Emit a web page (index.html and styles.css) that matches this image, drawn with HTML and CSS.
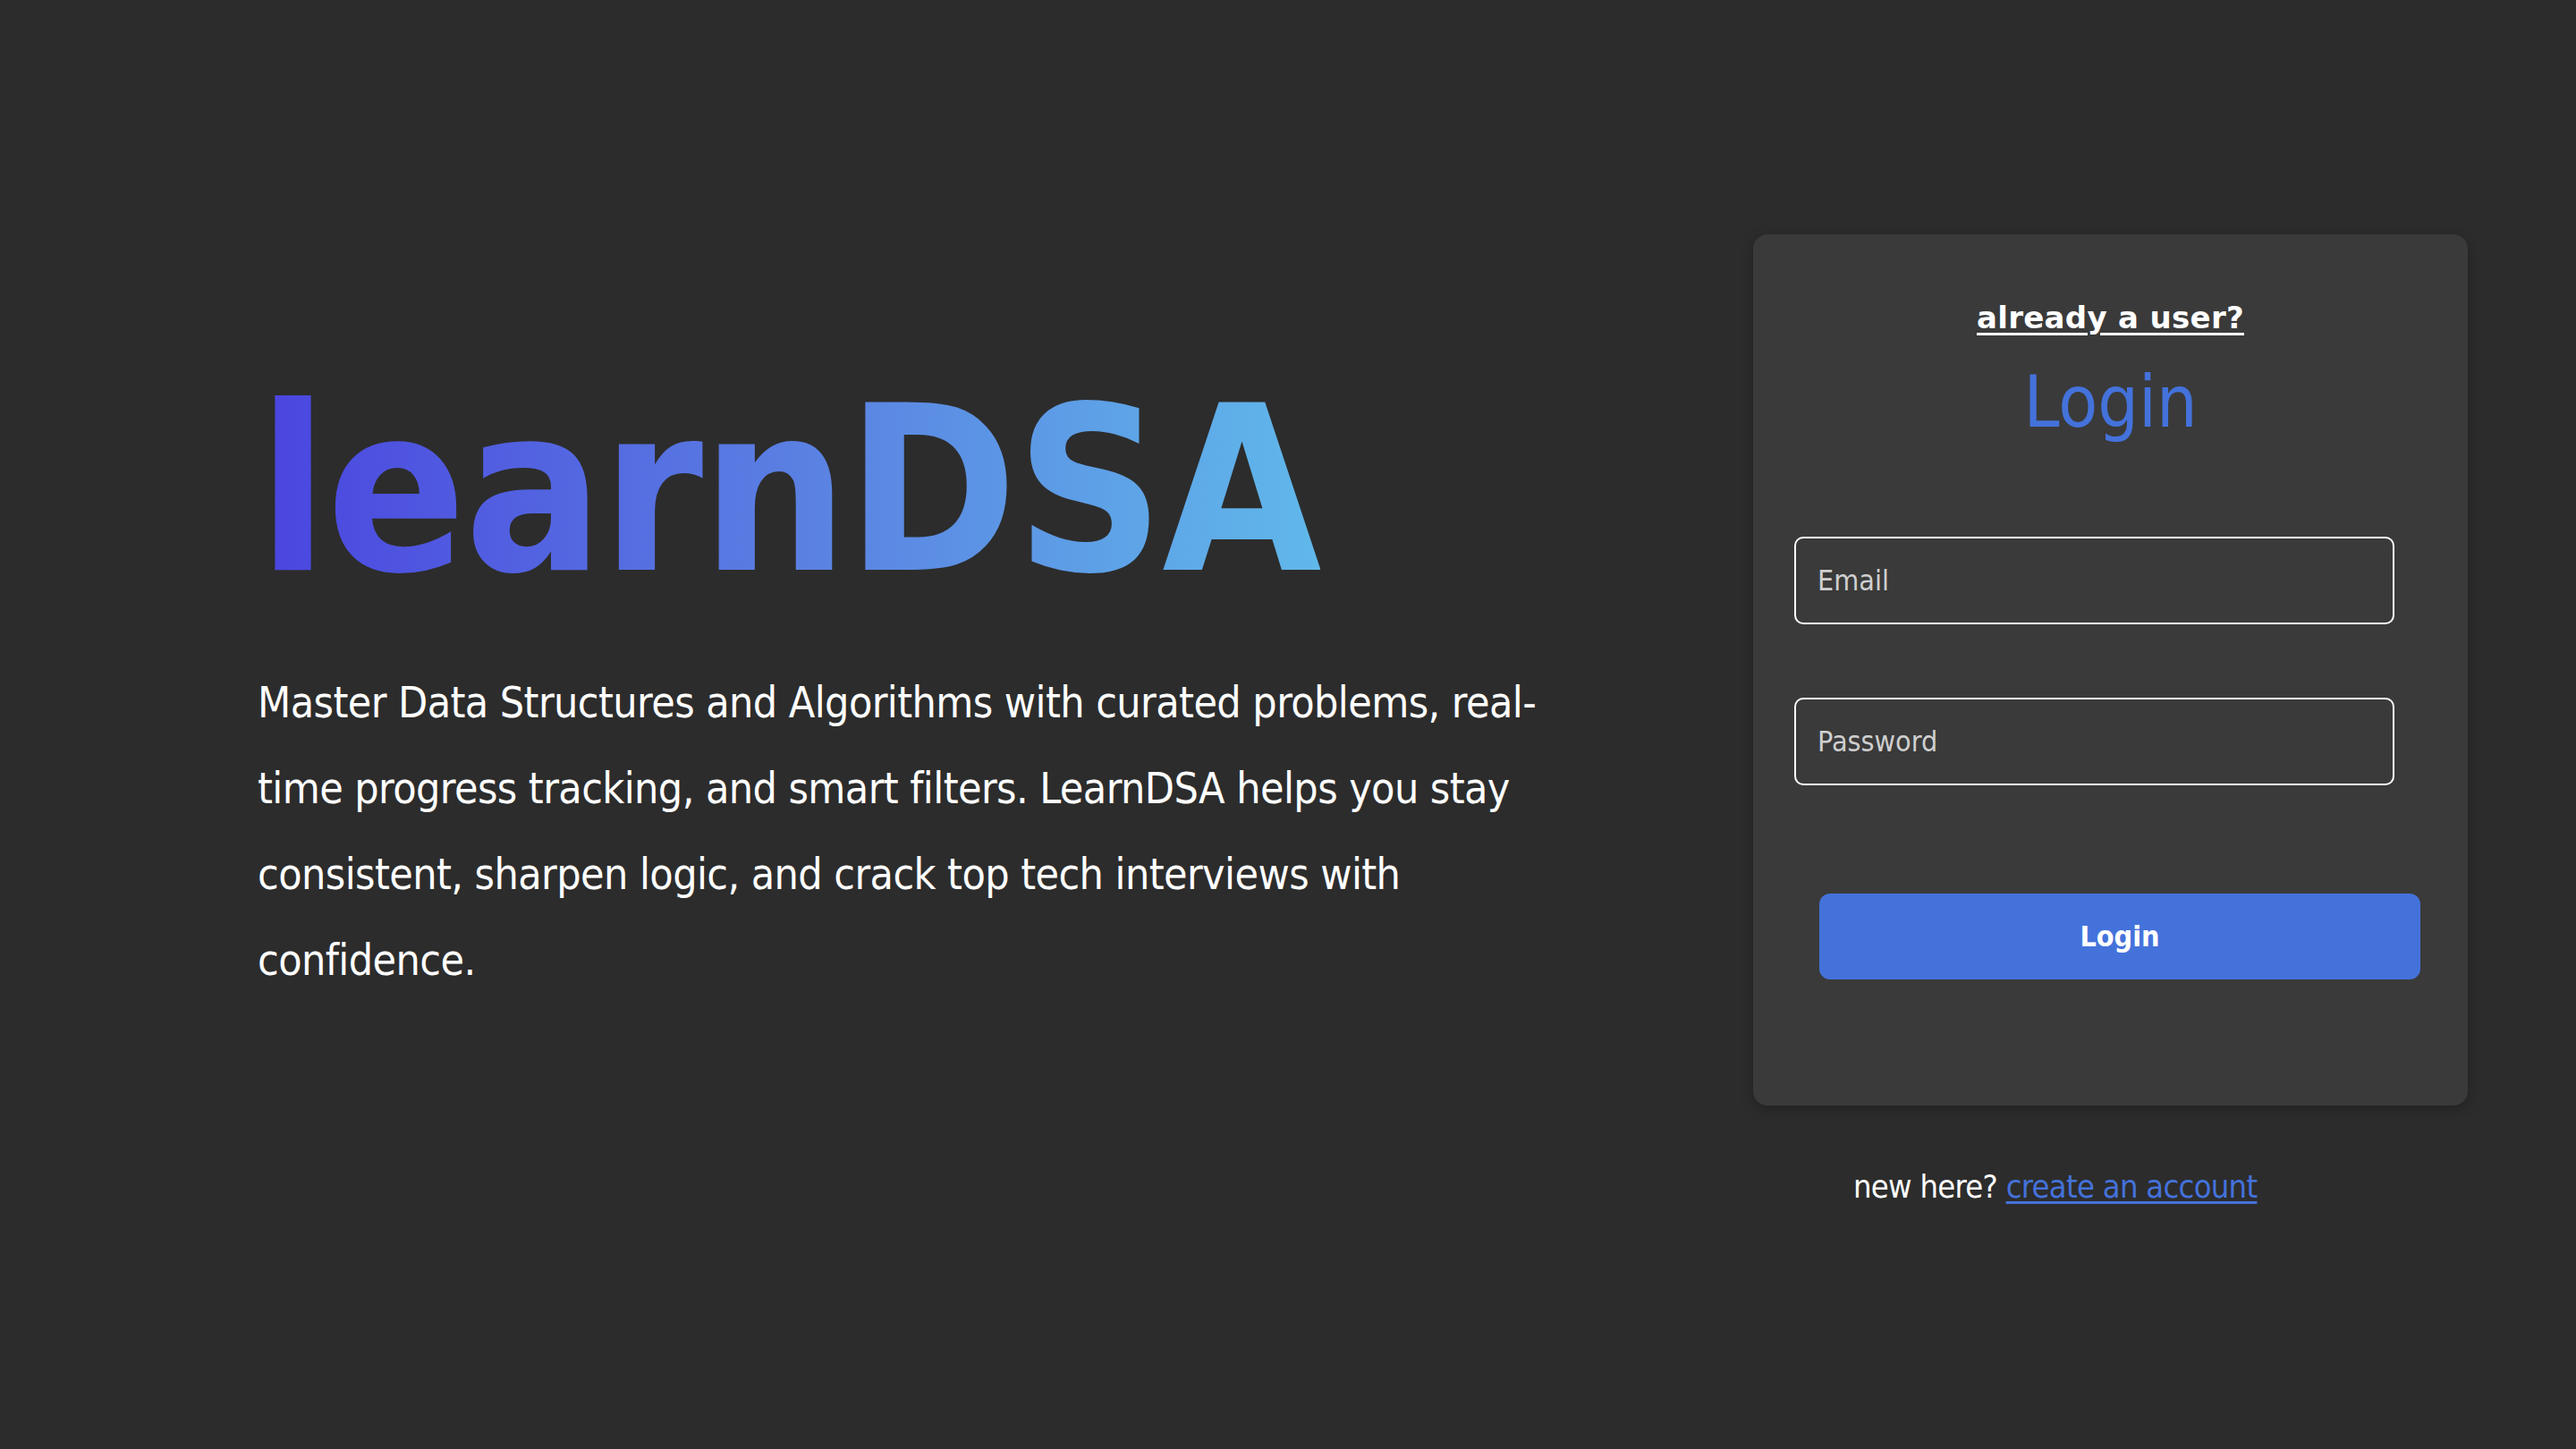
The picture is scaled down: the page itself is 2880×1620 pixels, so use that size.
FILE: index.html
```html
<!DOCTYPE html>
<html lang="en">
<head>
<meta charset="utf-8">
<title>learnDSA</title>
<link rel="stylesheet" href="styles.css">
</head>
<body>
<main class="page">
  <section class="hero">
    <h1 class="brand">learnDSA</h1>
    <p class="tagline">Master Data Structures and Algorithms with curated problems, real-time progress tracking, and smart filters. LearnDSA helps you stay consistent, sharpen logic, and crack top tech interviews with confidence.</p>
  </section>
  <section class="auth">
    <form class="card">
      <a class="already" href="#">already a user?</a>
      <h2 class="card-title">Login</h2>
      <input class="field" type="email" placeholder="Email">
      <input class="field field-pass" type="password" placeholder="Password">
      <button class="submit" type="button">Login</button>
    </form>
    <p class="signup">new here? <a class="signup-link" href="#">create an account</a></p>
  </section>
</main>
</body>
</html>
```
FILE: styles.css
```css
* { box-sizing: border-box; }
html, body { margin: 0; padding: 0; }
body {
  background: #2c2c2c;
  color: #ffffff;
  font-family: "DejaVu Sans Condensed", "DejaVu Sans", sans-serif;
  width: 2880px;
  height: 1620px;
  overflow: hidden;
}
.page {
  display: flex;
  height: 1620px;
  align-items: center;
}
.hero {
  width: 1728px;
  padding-left: 288px;
  padding-bottom: 100px;
  display: flex;
  flex-direction: column;
  align-items: flex-start;
}
.brand {
  margin: 0;
  font-size: 256px;
  font-weight: 700;
  line-height: 298px;
  letter-spacing: -2px;
  display: inline-block;
  background: linear-gradient(90deg, #4a44df 0%, #5a7fe2 50%, #60b8ea 100%);
  -webkit-background-clip: text;
  background-clip: text;
  color: transparent;
}
.tagline {
  margin: 40px 0 0 0;
  font-size: 48px;
  line-height: 96px;
  letter-spacing: -0.6px;
  color: #ffffff;
  max-width: 1470px;
}
.auth {
  align-self: flex-start;
  margin-top: 262px;
  display: flex;
  flex-direction: column;
  align-items: flex-start;
  margin-left: 232px;
}
.card {
  width: 799px;
  height: 974px;
  background: #3a3a3a;
  border-radius: 16px;
  box-shadow: 0 4px 14px rgba(0, 0, 0, 0.25);
  display: flex;
  flex-direction: column;
  align-items: flex-start;
  padding-top: 73px;
}
.already {
  align-self: center;
  color: #ffffff;
  font-family: "DejaVu Sans", sans-serif;
  font-size: 34px;
  font-weight: 700;
  letter-spacing: 0.3px;
  line-height: 40px;
  text-decoration: underline;
  text-underline-offset: 5px;
  text-decoration-thickness: 3px;
}
.card-title {
  align-self: center;
  margin: 25px 0 0 0;
  color: #4472db;
  font-size: 80px;
  font-weight: 400;
  line-height: 100px;
}
.field {
  margin: 100px 0 0 46px;
  width: 671px;
  height: 98px;
  background: transparent;
  border: 2px solid #ffffff;
  border-radius: 10px;
  padding: 0 24px;
  font-family: inherit;
  font-size: 32px;
  color: #ffffff;
  outline: none;
}
.field::placeholder { color: #cfcfcf; }
.field-pass { margin-top: 82px; }
.submit {
  margin: 121px 0 0 74px;
  width: 672px;
  height: 96px;
  background: #4472db;
  color: #ffffff;
  border: none;
  border-radius: 12px;
  font-family: inherit;
  font-size: 32px;
  font-weight: 700;
}
.signup {
  margin: 69px 0 0 112px;
  font-size: 36px;
  line-height: 44px;
  letter-spacing: -0.7px;
  color: #ffffff;
}
.signup-link {
  color: #4472db;
  text-decoration: underline;
  text-underline-offset: 4px;
}
```
